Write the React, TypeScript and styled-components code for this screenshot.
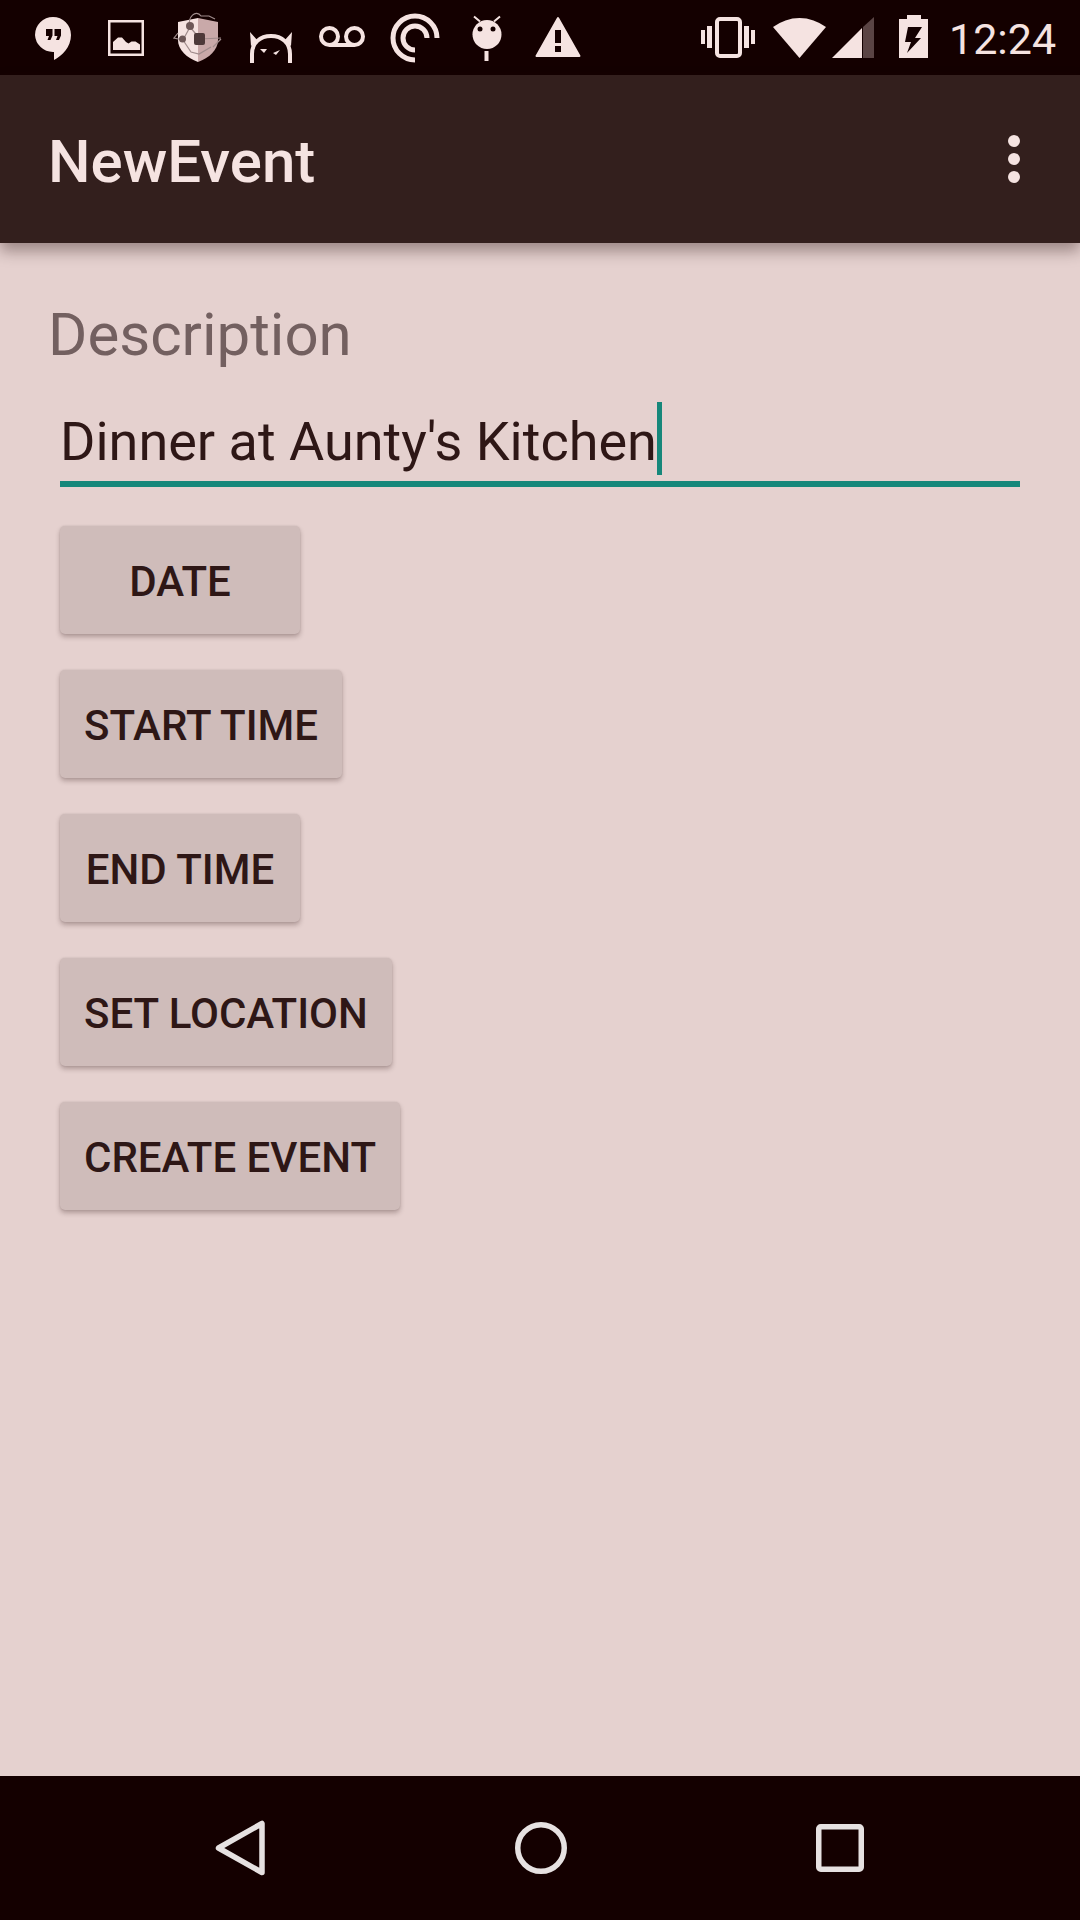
import styled, { createGlobalStyle } from 'styled-components';

const LIGHT = '#f5e3e1';
const DARK = '#140000';

const GlobalStyle = createGlobalStyle`
    html, body {
        margin: 0;
        padding: 0;
        background: #e5d1cf;
    }
`;

const Page = styled.div`
    width: 1080px;
    height: 1920px;
    display: flex;
    flex-direction: column;
    overflow: hidden;
    font-family: Roboto, sans-serif;
    background: #e5d1cf;
`;

const StatusBar = styled.div`
    height: 75px;
    flex: none;
    display: flex;
    align-items: flex-start;
    padding-left: 35px;
    background: ${DARK};
`;

const StatusIcon = styled.svg<{ $left: number }>`
    display: block;
    flex: none;
    height: 75px;
    margin-left: ${p => p.$left}px;
`;

const Clock = styled.span`
    margin-left: 21px;
    font-size: 43px;
    line-height: 78px;
    color: ${LIGHT};
`;

const AppBar = styled.header`
    height: 168px;
    flex: none;
    display: flex;
    align-items: center;
    justify-content: space-between;
    padding: 0 60px 0 48px;
    background: #331f1d;
    box-shadow: 0 8px 14px rgba(40, 15, 15, 0.38);
    position: relative;
    z-index: 1;
`;

const Title = styled.h1`
    margin: 0;
    padding-top: 5px;
    font-size: 60px;
    line-height: 70px;
    font-weight: 500;
    color: ${LIGHT};
`;

const OverflowIcon = styled.svg`
    display: block;
    width: 12px;
    height: 48px;
    fill: ${LIGHT};
`;

const Form = styled.main`
    flex: 1;
    display: flex;
    flex-direction: column;
    align-items: flex-start;
    padding: 60px 60px 0 48px;
`;

const Label = styled.label`
    font-size: 60px;
    line-height: 64px;
    color: #736060;
`;

const Field = styled.div`
    align-self: stretch;
    display: flex;
    height: 85px;
    box-sizing: border-box;
    margin: 35px 0 39px 12px;
    border-bottom: 6px solid #16877a;
`;

const FieldText = styled.span`
    font-size: 54px;
    line-height: 80px;
    color: #2e1716;
    white-space: nowrap;
`;

const Caret = styled.span`
    width: 5px;
    height: 73px;
    flex: none;
    background: #16877a;
`;

const ButtonStack = styled.div`
    display: flex;
    flex-direction: column;
    align-items: flex-start;
    gap: 36px;
    margin-left: 12px;
`;

const ActionButton = styled.button`
    min-width: 240px;
    height: 108px;
    padding: 2px 24px 0;
    border: none;
    border-radius: 5px;
    background: #cfbcba;
    box-shadow: 0 3px 5px rgba(40, 15, 15, 0.28), 0 0 2px rgba(40, 15, 15, 0.12);
    font-family: Roboto, sans-serif;
    font-size: 42px;
    font-weight: 500;
    color: #2e1716;
`;

const NavBar = styled.nav`
    height: 144px;
    flex: none;
    display: flex;
    align-items: center;
    justify-content: space-between;
    padding: 0 216px 0 215px;
    background: ${DARK};
`;

const NavIcon = styled.svg`
    display: block;
    fill: none;
    stroke: #e6e1e1;
    stroke-width: 5.5px;
    stroke-linejoin: round;
`;

const BUTTONS = ['DATE', 'START TIME', 'END TIME', 'SET LOCATION', 'CREATE EVENT'];

function NotificationIcons() {
    return (
        <>
            {/* hangouts */}
            <StatusIcon $left={0} width="36" viewBox="0 0 36 75">
                <path fill={LIGHT} d="M18 17a18 18 0 0 0-18 18a18 18 0 0 0 18 17h1v8c8-4 17-13 17-25a18 18 0 0 0-18-18z" />
                <path fill={DARK} d="M11 29h6.500v6.500l-2 4.500h-3l1.500-4h-3zM19.500 29h6.500v6.500l-2 4.500h-3l1.500-4h-3z" />
            </StatusIcon>
            {/* picture */}
            <StatusIcon $left={37} width="36" viewBox="0 0 36 75">
                <rect x="1.250" y="21.250" width="33.500" height="33.500" fill="none" stroke={LIGHT} strokeWidth="2.500" />
                <path fill={LIGHT} d="M5 50v-8l5-4.500 4 0 4 4.500 2.500 1.500 3-2 4 0 4.500 3v5.500z" />
            </StatusIcon>
            {/* shield */}
            <StatusIcon $left={29} width="50" viewBox="0 0 50 75">
                <path fill={LIGHT} d="M25 18l-20 4v18c0 10 9 18 20 22z" />
                <path fill="#c9a9a9" d="M25 18l20 4v18c0 10-9 18-20 22z" />
                <g fill="none" stroke="#a08c8c" strokeWidth="1.200">
                    <path d="M17 27c-3-10 6-18 11-11l8 0 6 3M17 27l-7 13 8 12 8 2 12-7M27 39l-10-12M27 39l21-1" />
                    <path d="M10 40l-9-2 4-5M40 47l8-8" />
                </g>
                <circle cx="17" cy="26" r="4" fill="#6e5858" />
                <circle cx="9.500" cy="39" r="3.500" fill="#6e5858" />
                <rect x="21" y="33" width="11" height="12" rx="2" fill="#4e3a3a" />
            </StatusIcon>
            {/* horned face */}
            <StatusIcon $left={26} width="44" viewBox="0 0 44 75">
                <path fill="none" stroke={LIGHT} strokeWidth="4" d="M3 63v-9c0-11 8-18 19-18s19 7 19 18v9" />
                <path fill={LIGHT} d="M1 32l8 9-7 5zM43 32l-8 9 7 5zM11 49h7l-3 4zM24 53l3 2 4-5z" />
            </StatusIcon>
            {/* voicemail */}
            <StatusIcon $left={26} width="46" viewBox="0 0 46 75">
                <g fill="none" stroke={LIGHT} strokeWidth="4">
                    <circle cx="10.500" cy="36.500" r="8.500" />
                    <circle cx="35.500" cy="36.500" r="8.500" />
                    <path d="M10.500 45h25" />
                </g>
            </StatusIcon>
            {/* rings */}
            <StatusIcon $left={25} width="50" viewBox="0 0 50 75">
                <g fill="none" stroke={LIGHT} strokeWidth="5">
                    <path d="M47 38a22 22 0 1 0-22 22" />
                    <path d="M37 38a12 12 0 1 0-12 12" />
                </g>
            </StatusIcon>
            {/* android lollipop */}
            <StatusIcon $left={32} width="30" viewBox="0 0 30 75">
                <circle cx="15" cy="34.500" r="14.500" fill={LIGHT} />
                <path stroke={LIGHT} strokeWidth="2" d="M2 16.500l6 5M28 16.500l-6 5" />
                <circle cx="8" cy="29" r="2.500" fill={DARK} />
                <circle cx="21" cy="29" r="2.500" fill={DARK} />
                <rect x="12.500" y="51" width="4" height="10" fill={LIGHT} />
            </StatusIcon>
            {/* warning */}
            <StatusIcon $left={33} width="46" viewBox="0 0 46 75">
                <path fill={LIGHT} stroke={LIGHT} strokeWidth="2" strokeLinejoin="round" d="M23 18l21.500 38h-43z" />
                <path fill={DARK} d="M20 30h6v13h-6zM20 46h6v6h-6z" />
            </StatusIcon>
        </>
    );
}

function SystemIcons() {
    return (
        <>
            {/* vibrate */}
            <StatusIcon $left={120} width="54" viewBox="0 0 54 75">
                <rect x="16" y="19" width="23" height="37" rx="3" fill="none" stroke={LIGHT} strokeWidth="4" />
                <path fill={LIGHT} d="M0 30h4v14h-4zM6 26h5v22h-5zM43 26h5v22h-5zM50 30h4v14h-4z" />
            </StatusIcon>
            {/* wifi */}
            <StatusIcon $left={18} width="53" viewBox="0 0 53 75">
                <path fill={LIGHT} d="M26.500 58L0 27a44 44 0 0 1 53 0z" />
            </StatusIcon>
            {/* signal */}
            <StatusIcon $left={6} width="42" viewBox="0 0 42 75">
                <path fill={LIGHT} d="M0 58l30-30v30z" />
                <path fill="#5a4444" d="M31 27l11-10v41h-11z" />
            </StatusIcon>
            {/* battery charging */}
            <StatusIcon $left={25} width="29" viewBox="0 0 29 75">
                <path fill={LIGHT} d="M8 15h14v4h7v39h-29v-39h8z" />
                <path fill={DARK} d="M9 27h14l-7 11h6l-14 15 4-11h-6z" />
            </StatusIcon>
        </>
    );
}

export default function App() {
    return (
        <Page>
            <GlobalStyle />
            <StatusBar>
                <NotificationIcons />
                <SystemIcons />
                <Clock>12:24</Clock>
            </StatusBar>
            <AppBar>
                <Title>NewEvent</Title>
                <OverflowIcon viewBox="0 0 12 48">
                    <circle cx="6" cy="6" r="6" />
                    <circle cx="6" cy="24" r="6" />
                    <circle cx="6" cy="42" r="6" />
                </OverflowIcon>
            </AppBar>
            <Form>
                <Label>Description</Label>
                <Field>
                    <FieldText>Dinner at Aunty's Kitchen</FieldText>
                    <Caret />
                </Field>
                <ButtonStack>
                    {BUTTONS.map(text => (
                        <ActionButton key={text}>{text}</ActionButton>
                    ))}
                </ButtonStack>
            </Form>
            <NavBar>
                <NavIcon width="50" height="56" viewBox="0 0 50 56">
                    <path d="M3.500 28L47 3.500v49z" />
                </NavIcon>
                <NavIcon width="52" height="52" viewBox="0 0 52 52">
                    <circle cx="26" cy="26" r="23.250" />
                </NavIcon>
                <NavIcon width="48" height="48" viewBox="0 0 48 48">
                    <rect x="2.750" y="2.750" width="42.500" height="42.500" rx="2" />
                </NavIcon>
            </NavBar>
        </Page>
    );
}
